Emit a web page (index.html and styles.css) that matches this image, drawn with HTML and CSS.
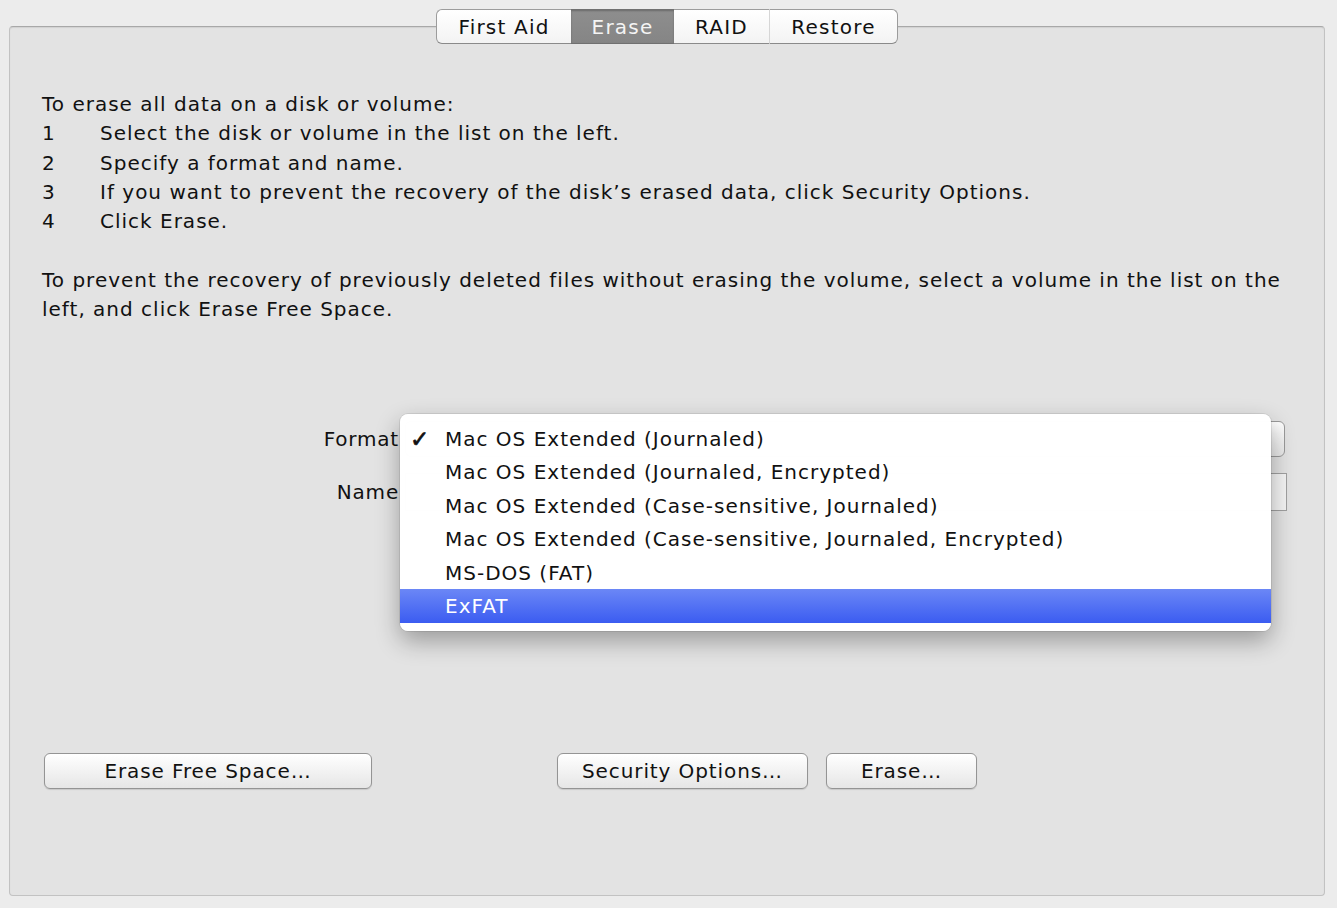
FILE: index.html
```html
<!DOCTYPE html>
<html>
<head>
<meta charset="utf-8">
<link rel="stylesheet" href="styles.css">
</head>
<body>
<div class="window">
  <div class="tabs">
    <div class="seg">First Aid</div>
    <div class="seg active">Erase</div>
    <div class="seg sep">RAID</div>
    <div class="seg">Restore</div>
  </div>
  <div class="panel">
    <div class="intro">
      <p>To erase all data on a disk or volume:</p>
      <ol class="steps">
        <li><span class="num">1</span><span>Select the disk or volume in the list on the left.</span></li>
        <li><span class="num">2</span><span>Specify a format and name.</span></li>
        <li><span class="num">3</span><span>If you want to prevent the recovery of the disk’s erased data, click Security Options.</span></li>
        <li><span class="num">4</span><span>Click Erase.</span></li>
      </ol>
      <p class="para2">To prevent the recovery of previously deleted files without erasing the volume, select a volume in the list on the left, and click Erase Free Space.</p>
    </div>
    <div class="form">
      <div class="row">
        <label class="lbl">Format</label>
        <div class="popup"></div>
      </div>
      <div class="row">
        <label class="lbl">Name</label>
        <div class="field"></div>
      </div>
      <div class="menu">
        <div class="item"><span class="check">✓</span>Mac OS Extended (Journaled)</div>
        <div class="item"><span class="check"></span>Mac OS Extended (Journaled, Encrypted)</div>
        <div class="item"><span class="check"></span>Mac OS Extended (Case-sensitive, Journaled)</div>
        <div class="item"><span class="check"></span>Mac OS Extended (Case-sensitive, Journaled, Encrypted)</div>
        <div class="item"><span class="check"></span>MS-DOS (FAT)</div>
        <div class="item selected"><span class="check"></span>ExFAT</div>
      </div>
    </div>
    <div class="buttons">
      <button class="btn wide">Erase Free Space…</button>
      <div class="right-btns">
        <button class="btn sec">Security Options…</button>
        <button class="btn erase">Erase…</button>
      </div>
    </div>
  </div>
</div>
</body>
</html>
```
FILE: styles.css
```css
* { box-sizing: border-box; }
html, body { margin: 0; padding: 0; }
body {
  background: #ececec;
  font-family: "DejaVu Sans", "Liberation Sans", sans-serif;
  font-size: 20px;
  letter-spacing: 1px;
  color: #111;
  width: 1337px;
  height: 908px;
  overflow: hidden;
}
.window {
  padding: 9px 12px 0 9px;
}
.tabs {
  display: flex;
  justify-content: center;
  position: relative;
  z-index: 2;
  height: 35px;
}
.tabs .seg {
  height: 35px;
  display: flex;
  align-items: center;
  justify-content: center;
  background: linear-gradient(#ffffff, #f3f3f3);
  border-top: 1px solid #9c9c9c;
  border-bottom: 1px solid #8a8a8a;
  font-size: 20px;
  letter-spacing: 1.2px;
  color: #111;
}
.tabs .seg:nth-child(1) { width: 135px; border-left: 1px solid #9c9c9c; border-radius: 6px 0 0 6px; }
.tabs .seg:nth-child(2) { width: 103px; }
.tabs .seg:nth-child(3) { width: 95px; }
.tabs .seg:nth-child(4) { width: 129px; border-right: 1px solid #9c9c9c; border-radius: 0 6px 6px 0; border-left: 1px solid #d6d6d6; }
.tabs .seg.active {
  background: linear-gradient(#8e8e8e, #858585);
  color: #f4f4f4;
  border-color: #707070;
  box-shadow: inset 0 1px 2px rgba(0,0,0,0.25);
}
.panel {
  margin-top: -18px;
  height: 870px;
  background: #e3e3e3;
  border: 1px solid #c2c2c2;
  border-top-color: #a8a8a8;
  border-radius: 4px;
  box-shadow: inset 0 1px 1px rgba(0,0,0,0.08);
  padding: 63px 30px 0 32px;
  position: relative;
}
.intro { line-height: 29.3px; }
.intro p { margin: 0; }
.steps { list-style: none; margin: 0; padding: 0; }
.steps li { display: flex; }
.steps .num { width: 58px; }
.para2 { margin-top: 29.3px !important; }
.form {
  position: relative;
  margin-top: 97px;
  display: flex;
  flex-direction: column;
  gap: 16px;
}
.row {
  display: flex;
  align-items: center;
}
.lbl {
  width: 359px;
  text-align: right;
  padding-right: 2px;
  letter-spacing: 0.8px;
}
.popup {
  margin-left: 4px;
  width: 880px;
  height: 36px;
  border: 1px solid #9a9a9a;
  border-radius: 6px;
  background: linear-gradient(#ffffff, #e8e8e8);
}
.field {
  margin-left: 4px;
  width: 882px;
  height: 38px;
  border: 1px solid #a0a0a0;
  background: #f4f4f4;
}
.menu {
  position: absolute;
  left: 358px;
  top: -7px;
  width: 871px;
  background: rgba(255,255,255,0.99);
  border-radius: 8px;
  padding: 8px 0 8px;
  box-shadow: 0 10px 24px rgba(0,0,0,0.32), 0 0 0 1px rgba(0,0,0,0.08);
  z-index: 3;
}
.item {
  height: 33.4px;
  display: flex;
  align-items: center;
  padding-left: 10px;
  font-size: 20px;
  letter-spacing: 1px;
}
.check {
  width: 35px;
  display: inline-block;
  font-size: 23px;
  -webkit-text-stroke: 0.7px #111;
  padding-left: 0;
  line-height: 1;
}
.item.selected {
  background: linear-gradient(#6b87f6, #3b5cf1);
  color: #fff;
}
.buttons {
  margin-top: 242px;
  display: flex;
  padding-left: 2px;
}
.right-btns { display: flex; gap: 18px; margin-left: 185px; }
.btn {
  font-family: inherit;
  font-size: 20px;
  letter-spacing: 0.9px;
  color: #111;
  height: 36px;
  border: 1px solid #949494;
  border-radius: 6px;
  background: linear-gradient(#ffffff, #f0f0f0 60%, #e6e6e6);
  box-shadow: 0 1px 1px rgba(0,0,0,0.12);
  padding: 0;
}
.btn.wide { width: 328px; }
.btn.sec { width: 251px; }
.btn.erase { width: 151px; }
```
